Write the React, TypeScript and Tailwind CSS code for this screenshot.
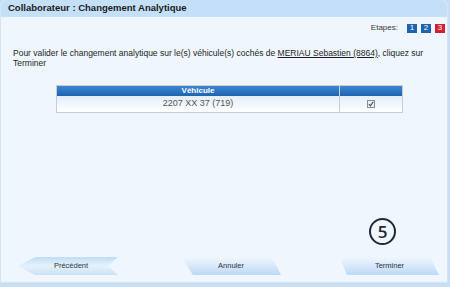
import React from "react";

const steps = [
  { n: "1", color: "bg-[#1c64ad]" },
  { n: "2", color: "bg-[#1c64ad]" },
  { n: "3", color: "bg-[#d3202f]" },
];

export default function App() {
  return (
    <div className="h-[287px] w-[450px] overflow-hidden bg-[#c6dff6] font-['Liberation_Sans',Arial,sans-serif]">
      <div className="flex h-[283px] w-[448px] flex-col rounded-t-[6px] border-x border-b border-[#d3e5f5] bg-[#eff6fd]">
        <div className="flex h-[17px] items-center rounded-t-[6px] bg-[#c4dff8] pl-[7px] text-[9.5px] font-bold text-[#1b1b1b]">
          Collaborateur : Changement Analytique
        </div>

        <div className="mt-[5px] flex items-center justify-end gap-[4px] pr-[2px]">
          <span className="mr-[5px] text-[8px] text-[#3a3a3a]">Etapes:</span>
          {steps.map((s) => (
            <span
              key={s.n}
              className={`flex h-[9px] w-[10px] items-center justify-center text-[8px] leading-none text-white ${s.color}`}
            >
              {s.n}
            </span>
          ))}
        </div>

        <p className="mt-[14px] pl-[12px] pr-[6px] text-[8.5px] leading-[10px] text-[#1e1e1e]">
          Pour valider le changement analytique sur le(s) véhicule(s) cochés de{" "}
          <u>MERIAU Sebastien (8864)</u>, cliquez sur
          <br />
          Terminer
        </p>

        <table className="ml-[55px] mt-[17px] w-[347px] border-collapse border border-[#c9ccd0]">
          <thead>
            <tr className="h-[10px] bg-gradient-to-b from-[#3a86d2] to-[#1d60ab] text-[8px] text-white">
              <th className="w-[283px] border-r border-[#c9d6e4] font-bold leading-[10px]">Véhicule</th>
              <th></th>
            </tr>
          </thead>
          <tbody>
            <tr className="h-[16px] bg-gradient-to-b from-[#e3eef9] to-white text-[9px] text-[#555]">
              <td className="border-r border-[#c9ccd0] text-center">2207 XX 37 (719)</td>
              <td>
                <div className="mx-auto flex h-[8px] w-[8px] items-center justify-center border border-[#8a8f96] bg-[#eceff3]">
                  <svg width="6" height="6" viewBox="0 0 6 6">
                    <path d="M0.8 3 L2.4 4.8 L5.3 0.8" fill="none" stroke="#3b4a66" strokeWidth="1.1" />
                  </svg>
                </div>
              </td>
            </tr>
          </tbody>
        </table>

        <div className="flex flex-1 items-end justify-end pb-[12px] pr-[51px]">
          <div className="flex h-[27px] w-[27px] items-center justify-center rounded-full border-2 border-[#1e2a33] font-['Open_Sans',sans-serif] text-[17px] font-semibold leading-none text-[#1e2a33]">
            5
          </div>
        </div>

        <div className="mb-[7px] flex h-[18px] items-stretch text-[7.5px] text-[#2b3440]">
          <div className="ml-[17px] flex w-[100px] items-center justify-center bg-gradient-to-b from-[#c0dcf5] via-[#e6f2fc] to-[#c9e1f7] pl-[6px] [clip-path:polygon(0_50%,17%_0,100%_0,90%_50%,100%_100%,17%_100%)]">
            Précédent
          </div>
          <div className="ml-[63px] flex w-[100px] items-center justify-center bg-gradient-to-b from-[#f0f7fe] to-[#bdd9f4] [clip-path:polygon(0_0,91%_0,100%_100%,12%_100%)]">
            Annuler
          </div>
          <div className="ml-[59px] flex w-[99px] items-center justify-center bg-gradient-to-b from-[#f0f7fe] to-[#bdd9f4] [clip-path:polygon(0_0,91%_0,100%_100%,7%_100%)]">
            Terminer
          </div>
        </div>
      </div>
    </div>
  );
}
